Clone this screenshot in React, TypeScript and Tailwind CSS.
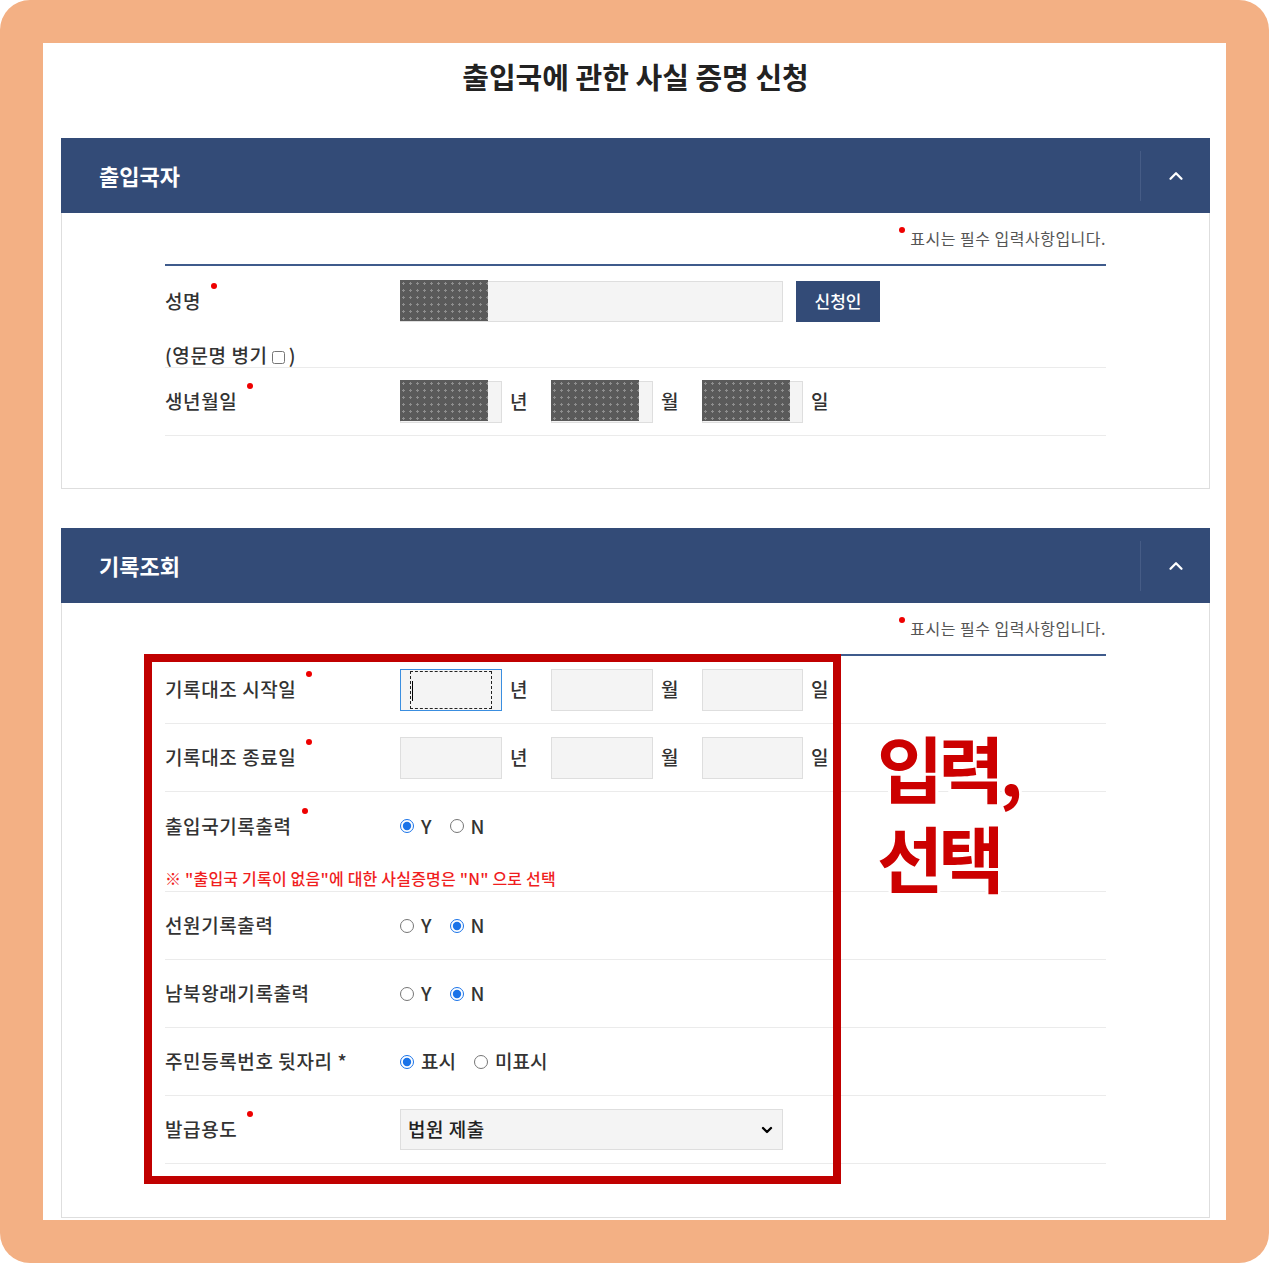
import { ChevronDown, ChevronUp } from "lucide-react";
import type { ReactNode } from "react";

const REDACT =
  "bg-[#5a5a5a] bg-[radial-gradient(circle,#8e8e8e_1px,transparent_1.3px)] bg-[length:7px_7px]";

function Dot({ className = "" }: { className?: string }) {
  return (
    <span className={`absolute h-[6px] w-[6px] rounded-full bg-[#ee0000] ${className}`} />
  );
}

function Label({ children, required }: { children: ReactNode; required?: boolean }) {
  return (
    <div className="w-[235px] shrink-0 text-[19px] font-medium tracking-[0.6px] text-[#333]">
      <span className="relative">
        {children}
        {required && <Dot className="-right-[16px] -top-[4px]" />}
      </span>
    </div>
  );
}

function SectionHeader({ title }: { title: string }) {
  return (
    <div className="flex h-[75px] items-center bg-[#334b77]">
      <h2 className="flex-1 pl-[38px] text-[22px] font-bold text-white">{title}</h2>
      <div className="h-[50px] w-px bg-[#465c86]" />
      <div className="flex w-[69px] items-center justify-center">
        <ChevronUp size={22} strokeWidth={2.5} className="text-white" />
      </div>
    </div>
  );
}

function RequiredNote() {
  return (
    <div className="flex h-[53px] justify-end border-b-2 border-[#3f5b8c] pt-[15px]">
      <span className="relative text-[16px] leading-[20px] tracking-[0.5px] text-[#555]">
        <Dot className="-left-[11px] -top-[1px]" />
        표시는 필수 입력사항입니다.
      </span>
    </div>
  );
}

function Box({
  redacted,
  focused,
  w = "w-[102px]",
}: {
  redacted?: boolean;
  focused?: boolean;
  w?: string;
}) {
  return (
    <div
      className={`relative h-[42px] shrink-0 bg-[#f4f4f4] ${w} ${
        focused ? "border border-[#3a8ee0]" : "border border-[#dedede]"
      }`}
    >
      {redacted && <div className={`absolute -left-px -top-[2px] h-[41px] w-[88px] ${REDACT}`} />}
      {focused && (
        <div className="absolute inset-y-[1px] left-[9px] right-[9px] border border-dashed border-[#222]">
          <div className="absolute left-[1px] top-[9px] h-[20px] w-px bg-black" />
        </div>
      )}
    </div>
  );
}

function DateInputs({ redacted, focused }: { redacted?: boolean; focused?: boolean }) {
  const units = ["년", "월", "일"];
  return (
    <div className="flex items-center">
      {units.map((u, i) => (
        <div key={u} className="flex items-center">
          <Box redacted={redacted} focused={focused && i === 0} w={i === 2 ? "w-[101px]" : "w-[102px]"} />
          <span className="w-[49px] pl-[8px] text-[19px] font-medium text-[#333]">{u}</span>
        </div>
      ))}
    </div>
  );
}

function Radio({ name, label, checked }: { name: string; label: string; checked?: boolean }) {
  return (
    <label className="mr-[18px] flex items-center gap-[7px] text-[19px] font-medium text-[#333]">
      <input
        type="radio"
        name={name}
        defaultChecked={checked}
        className="m-0 h-[14px] w-[14px] accent-[#1a73e8]"
      />
      {label}
    </label>
  );
}

function Row({ children, h = "h-[68px]" }: { children: ReactNode; h?: string }) {
  return <div className={`flex items-center border-b border-[#ebebeb] ${h}`}>{children}</div>;
}

export default function App() {
  return (
    <div className="min-h-screen bg-white font-['Noto_Sans_CJK_KR',sans-serif]">
      <div className="h-[1263px] w-[1269px] rounded-[30px] bg-[#f3b084] p-[43px]">
        <div className="h-full overflow-hidden bg-white pl-[18px] pr-[16px]">
          <h1 className="h-[95px] pt-[15px] text-center text-[29px] font-bold leading-[36px] text-[#222]">
            출입국에 관한 사실 증명 신청
          </h1>

          <section>
            <SectionHeader title="출입국자" />
            <div className="border-x border-b border-[#dedede] px-[103px] pb-[52px]">
              <RequiredNote />
              <div className="h-[102px] border-b border-[#ebebeb] pt-[15px]">
                <div className="flex h-[40px] items-center">
                  <Label required>성명</Label>
                  <div className="relative h-[41px] w-[383px] border border-[#dedede] bg-[#f4f4f4]">
                    <div className={`absolute -left-px -top-[2px] h-[41px] w-[88px] ${REDACT}`} />
                  </div>
                  <button className="ml-[13px] h-[41px] w-[84px] bg-[#334b77] text-[17px] font-medium text-white">
                    신청인
                  </button>
                </div>
                <div className="mt-[24px] flex items-center text-[19px] font-medium leading-[20px] tracking-[0.6px] text-[#333]">
                  (영문명 병기
                  <input type="checkbox" className="mx-[4px] mt-[4px] h-[13px] w-[13px]" />)
                </div>
              </div>
              <Row>
                <Label required>생년월일</Label>
                <DateInputs redacted />
              </Row>
            </div>
          </section>

          <section className="mt-[39px]">
            <SectionHeader title="기록조회" />
            <div className="relative border-x border-b border-[#dedede] px-[103px] pb-[53px]">
              <RequiredNote />
              <Row>
                <Label required>기록대조 시작일</Label>
                <DateInputs focused />
              </Row>
              <Row>
                <Label required>기록대조 종료일</Label>
                <DateInputs />
              </Row>
              <div className="h-[100px] border-b border-[#ebebeb]">
                <div className="flex h-[68px] items-center">
                  <Label required>출입국기록출력</Label>
                  <Radio name="io" label="Y" checked />
                  <Radio name="io" label="N" />
                </div>
                <p className="mt-[8px] text-[16px] font-medium leading-[20px] tracking-[0.2px] text-[#f01e1e]">
                  ※ "출입국 기록이 없음"에 대한 사실증명은 "N" 으로 선택
                </p>
              </div>
              <Row>
                <Label>선원기록출력</Label>
                <Radio name="crew" label="Y" />
                <Radio name="crew" label="N" checked />
              </Row>
              <Row>
                <Label>남북왕래기록출력</Label>
                <Radio name="nk" label="Y" />
                <Radio name="nk" label="N" checked />
              </Row>
              <Row>
                <Label>주민등록번호 뒷자리 *</Label>
                <Radio name="rrn" label="표시" checked />
                <Radio name="rrn" label="미표시" />
              </Row>
              <Row>
                <Label required>발급용도</Label>
                <div className="flex h-[41px] w-[383px] items-center justify-between border border-[#dedede] bg-[#f4f4f4] pl-[7px] pr-[7px] text-[19px] font-medium tracking-[0.5px] text-[#222]">
                  법원 제출
                  <ChevronDown size={16} strokeWidth={3.5} className="text-black" />
                </div>
              </Row>

              <div className="absolute left-[82px] top-[51px] h-[530px] w-[697px] border-[8px] border-[#c00000]" />
              <div className="absolute left-[815px] top-[118px] text-[72px] font-bold leading-[90px] tracking-[-5px] text-[#cc0000] [-webkit-text-stroke:6px_#fff] [paint-order:stroke_fill]">
                <div>입력,</div>
                <div>선택</div>
              </div>
            </div>
          </section>
        </div>
      </div>
    </div>
  );
}
